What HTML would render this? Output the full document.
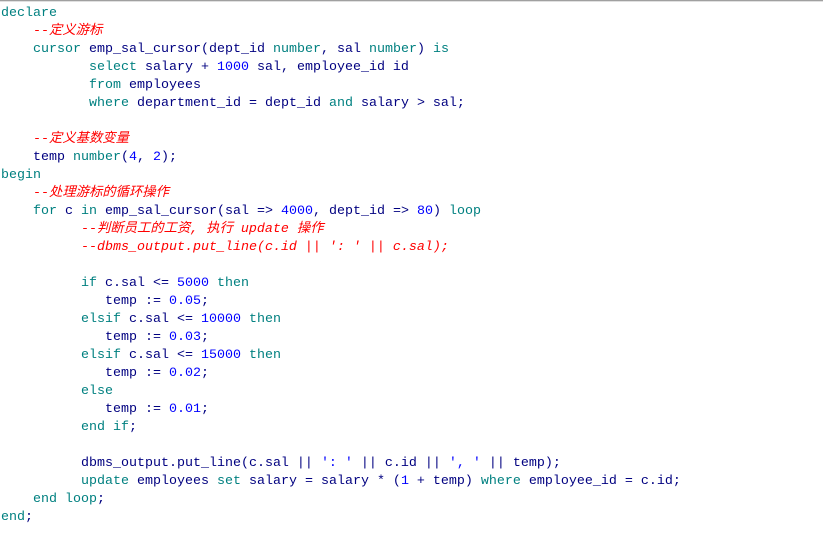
<!DOCTYPE html>
<html><head><meta charset="utf-8"><style>
body{margin:0;background:#fff;width:823px;height:535px;overflow:hidden}
.top{height:1px;background:#a0a0a0;border-bottom:1px solid #e0e0e0}
pre{margin:0;padding:3px 0 0 1px;font-family:"Liberation Mono","Noto Sans CJK SC",monospace;font-size:13.33px;line-height:18px;color:#000080}
.k{color:#008080}.n{color:#0000ff}.c{color:#ff0000;font-style:italic}
</style></head><body><div class="top"></div><pre><span class="k">declare</span>
    <span class="c">--定义游标</span>
    <span class="k">cursor</span> emp_sal_cursor(dept_id <span class="k">number</span>, sal <span class="k">number</span>) <span class="k">is</span>
           <span class="k">select</span> salary + <span class="n">1000</span> sal, employee_id id
           <span class="k">from</span> employees
           <span class="k">where</span> department_id = dept_id <span class="k">and</span> salary &gt; sal;

    <span class="c">--定义基数变量</span>
    temp <span class="k">number</span>(<span class="n">4</span>, <span class="n">2</span>);
<span class="k">begin</span>
    <span class="c">--处理游标的循环操作</span>
    <span class="k">for</span> c <span class="k">in</span> emp_sal_cursor(sal =&gt; <span class="n">4000</span>, dept_id =&gt; <span class="n">80</span>) <span class="k">loop</span>
          <span class="c">--判断员工的工资, 执行 update 操作</span>
          <span class="c">--dbms_output.put_line(c.id || ': ' || c.sal);</span>

          <span class="k">if</span> c.sal &lt;= <span class="n">5000</span> <span class="k">then</span>
             temp := <span class="n">0.05</span>;
          <span class="k">elsif</span> c.sal &lt;= <span class="n">10000</span> <span class="k">then</span>
             temp := <span class="n">0.03</span>;
          <span class="k">elsif</span> c.sal &lt;= <span class="n">15000</span> <span class="k">then</span>
             temp := <span class="n">0.02</span>;
          <span class="k">else</span>
             temp := <span class="n">0.01</span>;
          <span class="k">end if</span>;

          dbms_output.put_line(c.sal || <span class="n">': '</span> || c.id || <span class="n">', '</span> || temp);
          <span class="k">update</span> employees <span class="k">set</span> salary = salary * (<span class="n">1</span> + temp) <span class="k">where</span> employee_id = c.id;
    <span class="k">end loop</span>;
<span class="k">end</span>;
</pre></body></html>
